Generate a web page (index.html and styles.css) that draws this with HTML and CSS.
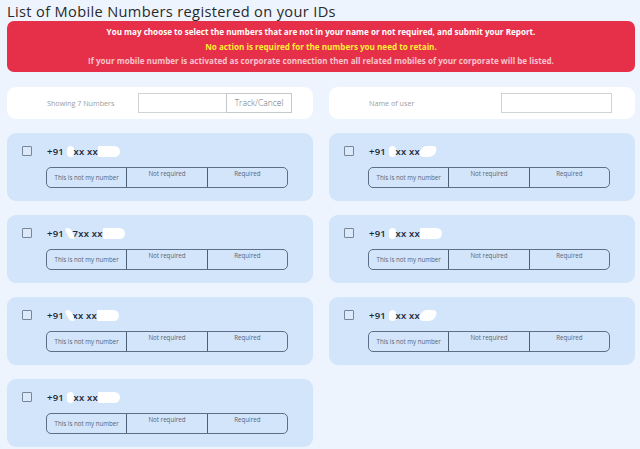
FILE: index.html
```html
<!DOCTYPE html>
<html>
<head>
<meta charset="utf-8">
<link rel="stylesheet" href="styles.css">
</head>
<body>
<div class="page">
  <h1 class="title">List of Mobile Numbers registered on your IDs</h1>
  <div class="banner">
    <p class="line white">You may choose to select the numbers that are not in your name or not required, and submit your Report.</p>
    <p class="line yellow">No action is required for the numbers you need to retain.</p>
    <p class="line faint">If your mobile number is activated as corporate connection then all related mobiles of your corporate will be listed.</p>
  </div>
  <div class="grid">
    <div class="panel">
      <span class="label">Showing 7 Numbers</span>
      <div class="search">
        <span class="field short"></span><span class="btn">Track/Cancel</span>
      </div>
    </div>
    <div class="panel">
      <span class="label">Name of user</span>
      <span class="field long"></span>
    </div>

    <div class="card">
      <div class="head"><span class="check"></span><span class="num">+91 <span class="blot b1"></span>xx xx<span class="blot b2"></span></span></div>
      <div class="seg"><span class="opt mid">This is not my number</span><span class="opt">Not required</span><span class="opt">Required</span></div>
    </div>
    <div class="card">
      <div class="head"><span class="check"></span><span class="num">+91 <span class="blot b1"></span>xx xx<span class="blot b3"></span></span></div>
      <div class="seg"><span class="opt mid">This is not my number</span><span class="opt">Not required</span><span class="opt">Required</span></div>
    </div>
    <div class="card">
      <div class="head"><span class="check"></span><span class="num">+91 <span class="blot b4"></span>7xx xx<span class="blot b2"></span></span></div>
      <div class="seg"><span class="opt mid">This is not my number</span><span class="opt">Not required</span><span class="opt">Required</span></div>
    </div>
    <div class="card">
      <div class="head"><span class="check"></span><span class="num">+91 <span class="blot b1"></span>xx xx<span class="blot b2"></span></span></div>
      <div class="seg"><span class="opt mid">This is not my number</span><span class="opt">Not required</span><span class="opt">Required</span></div>
    </div>
    <div class="card">
      <div class="head"><span class="check"></span><span class="num">+91 <span class="blot b4"></span>xx xx<span class="blot b2"></span></span></div>
      <div class="seg"><span class="opt mid">This is not my number</span><span class="opt">Not required</span><span class="opt">Required</span></div>
    </div>
    <div class="card">
      <div class="head"><span class="check"></span><span class="num">+91 <span class="blot b1"></span>xx xx<span class="blot b3"></span></span></div>
      <div class="seg"><span class="opt mid">This is not my number</span><span class="opt">Not required</span><span class="opt">Required</span></div>
    </div>
    <div class="card">
      <div class="head"><span class="check"></span><span class="num">+91 <span class="blot b1"></span>xx xx<span class="blot b2"></span></span></div>
      <div class="seg"><span class="opt mid">This is not my number</span><span class="opt">Not required</span><span class="opt">Required</span></div>
    </div>
  </div>
</div>
</body>
</html>
```
FILE: styles.css
```css
* { box-sizing: border-box; }
html, body { margin: 0; padding: 0; }
body {
  background: #eef4fd;
  font-family: "Open Sans", "Liberation Sans", sans-serif;
  color: #222;
  width: 640px;
  height: 449px;
  overflow: hidden;
}
.page { padding: 1px 5px 0 7px; }
.title {
  margin: 0;
  font-size: 14.6px;
  font-weight: 400;
  line-height: 20px;
  color: #2a2a2a;
  letter-spacing: 0.35px;
}
.banner {
  height: 51px;
  background: #e6304a;
  border-radius: 7px;
  padding-top: 4px;
  text-align: center;
}
.line {
  margin: 0;
  font-size: 8.1px;
  font-weight: 700;
  line-height: 14.5px;
}
.white { color: #fff; }
.yellow { color: #ffee33; }
.faint { color: rgba(255, 255, 255, 0.72); }

.grid {
  margin-top: 15px;
  display: grid;
  grid-template-columns: 306px 306px;
  column-gap: 16px;
  row-gap: 14px;
}
.panel {
  background: #fff;
  border-radius: 9px;
  height: 32px;
  display: flex;
  align-items: center;
  padding-left: 40px;
}
.label {
  font-size: 7.2px;
  color: #9a9ea4;
  width: 91px;
}
.panel:nth-child(2) .label { width: 132px; }
.search { display: flex; }
.field {
  display: block;
  height: 20px;
  border: 1px solid #cfd3d8;
  background: #fff;
}
.short { width: 88px; border-right: none; }
.long { width: 111px; height: 20px; }
.btn {
  display: block;
  height: 20px;
  width: 66px;
  border: 1px solid #c5c8cc;
  font-size: 8.5px;
  font-weight: 300;
  line-height: 18px;
  text-align: center;
  color: #6a6f76;
}

.card {
  background: #d2e5fa;
  border-radius: 9px;
  height: 68px;
  padding: 12px 0 0 15px;
}
.head {
  display: flex;
  align-items: center;
  height: 12px;
}
.check {
  width: 10px;
  height: 10px;
  border: 1px solid #77879a;
  border-radius: 1px;
  background: #dbe9fb;
  margin-right: 15px;
}
.num {
  font-size: 9.5px;
  font-weight: 600;
  color: #1d2633;
  letter-spacing: 0.2px;
  white-space: nowrap;
}
.blot {
  display: inline-block;
  background: #fff;
  border-radius: 5px;
  height: 11px;
  vertical-align: -2px;
}
.b1 { width: 7px; }
.b2 { width: 22px; border-radius: 2px 8px 8px 2px; }
.b3 { width: 16px; transform: skewX(-20deg); }
.b4 { width: 6px; transform: skewX(25deg); }

.seg {
  margin: 10px 0 0 24px;
  width: 242px;
  height: 21px;
  display: flex;
  border: 1px solid #5d6f86;
  border-radius: 5px;
}
.opt {
  flex: 1;
  font-size: 6.2px;
  color: #5a6472;
  text-align: center;
  line-height: 11px;
}
.opt + .opt { border-left: 1.2px solid #4d5f76; }
.opt.mid { line-height: 20px; }
```
